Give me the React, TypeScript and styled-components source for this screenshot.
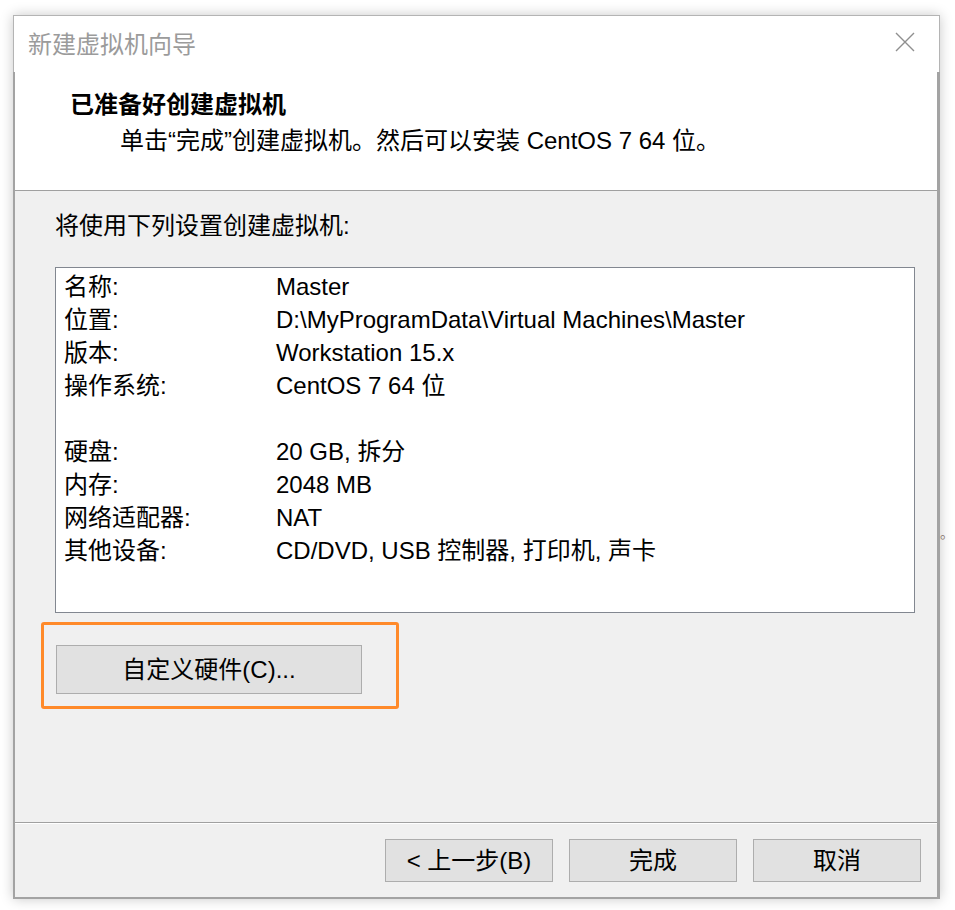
import React from "react";
import styled, { createGlobalStyle } from "styled-components";

const GlobalStyle = createGlobalStyle`
  html, body {
    margin: 0;
    padding: 0;
    background: #ffffff;
  }
  body {
    font-family: "Liberation Sans", "Noto Sans CJK SC", sans-serif;
    color: #000;
  }
`;

const Page = styled.div`
  position: relative;
  width: 955px;
  height: 910px;
  padding: 15px 0 0 13px;
  box-sizing: border-box;
`;

const Stray = styled.span`
  position: absolute;
  left: 940px;
  top: 522px;
  font-size: 14px;
  color: #8a7a70;
`;

const Window = styled.div`
  width: 927px;
  display: flex;
  flex-direction: column;
  box-shadow: 0 0 12px rgba(0, 0, 0, 0.22);
`;

const TitleBar = styled.div`
  height: 56px;
  display: flex;
  align-items: center;
  justify-content: space-between;
  background: #fff;
  border: 1px solid #b4b4b4;
  border-bottom: none;
  padding: 0 24px 0 14px;
  box-sizing: content-box;
`;

const TitleText = styled.div`
  font-size: 24px;
  color: #9b9b9b;
  margin-top: -4px;
`;

const CloseIcon = styled.svg`
  width: 20px;
  height: 20px;
  margin-top: -4px;
`;

const Frame = styled.div`
  display: flex;
  flex-direction: column;
  border-left: 2px solid #a3a3a3;
  border-right: 3px solid #a3a3a3;
  border-bottom: 2px solid #a3a3a3;
  background: #f0f0f0;
`;

const Header = styled.div`
  height: 119px;
  background: #fff;
  border-bottom: 1px solid #a0a0a0;
  padding-top: 16px;
  box-sizing: border-box;
`;

const Heading = styled.div`
  font-size: 24px;
  font-weight: 700;
  line-height: 33px;
  padding-left: 55px;
`;

const SubText = styled.div`
  font-size: 24px;
  line-height: 33px;
  margin-top: 3px;
  padding-left: 105px;
`;

const Content = styled.div`
  height: 632px;
  padding: 18px 22px 0 40px;
  box-sizing: border-box;
  border-bottom: 1px solid #a0a0a0;
`;

const Intro = styled.div`
  font-size: 24px;
  line-height: 33px;
`;

const SummaryBox = styled.div`
  margin-top: 25px;
  height: 346px;
  box-sizing: border-box;
  background: #fff;
  border: 1px solid #828790;
  padding: 2px 8px;
`;

const Row = styled.div`
  display: grid;
  grid-template-columns: 212px 1fr;
  font-size: 24px;
  line-height: 33px;
  height: 33px;
  white-space: nowrap;
`;

const Highlight = styled.div`
  margin: 9px 0 0 -14px;
  width: 358px;
  height: 87px;
  box-sizing: border-box;
  border: 3px solid #ff8a2a;
  border-radius: 3px;
  padding: 20px 0 0 12px;
`;

const Button = styled.button<{ $w: number; $h: number }>`
  width: ${(p) => p.$w}px;
  height: ${(p) => p.$h}px;
  background: #e1e1e1;
  border: 1px solid #adadad;
  border-radius: 0;
  font-family: "Liberation Sans", "Noto Sans CJK SC", sans-serif;
  font-size: 24px;
  color: #000;
  padding: 0;
  margin: 0;
  line-height: 1;
`;

const Footer = styled.div`
  height: 74px;
  border-top: 1px solid #ffffff;
  display: flex;
  justify-content: flex-end;
  align-items: flex-start;
  gap: 16px;
  padding: 15px 16px 0 0;
  box-sizing: border-box;
`;

const rows: [string, string][] = [
  ["名称:", "Master"],
  ["位置:", "D:\\MyProgramData\\Virtual Machines\\Master"],
  ["版本:", "Workstation 15.x"],
  ["操作系统:", "CentOS 7 64 位"],
  ["", ""],
  ["硬盘:", "20 GB, 拆分"],
  ["内存:", "2048 MB"],
  ["网络适配器:", "NAT"],
  ["其他设备:", "CD/DVD, USB 控制器, 打印机, 声卡"],
];

export default function App() {
  return (
    <Page>
      <GlobalStyle />
      <Window>
        <TitleBar>
          <TitleText>新建虚拟机向导</TitleText>
          <CloseIcon viewBox="0 0 20 20">
            <path d="M1 1 L19 19 M19 1 L1 19" stroke="#8f8f8f" strokeWidth="1.4" fill="none" />
          </CloseIcon>
        </TitleBar>
        <Frame>
          <Header>
            <Heading>已准备好创建虚拟机</Heading>
            <SubText>单击“完成”创建虚拟机。然后可以安装 CentOS 7 64 位。</SubText>
          </Header>
          <Content>
            <Intro>将使用下列设置创建虚拟机:</Intro>
            <SummaryBox>
              {rows.map(([k, v], i) => (
                <Row key={i}>
                  <span>{k}</span>
                  <span>{v}</span>
                </Row>
              ))}
            </SummaryBox>
            <Highlight>
              <Button $w={306} $h={49}>自定义硬件(C)...</Button>
            </Highlight>
          </Content>
          <Footer>
            <Button $w={168} $h={43}>&lt; 上一步(B)</Button>
            <Button $w={168} $h={43}>完成</Button>
            <Button $w={168} $h={43}>取消</Button>
          </Footer>
        </Frame>
      </Window>
      <Stray>。</Stray>
    </Page>
  );
}
